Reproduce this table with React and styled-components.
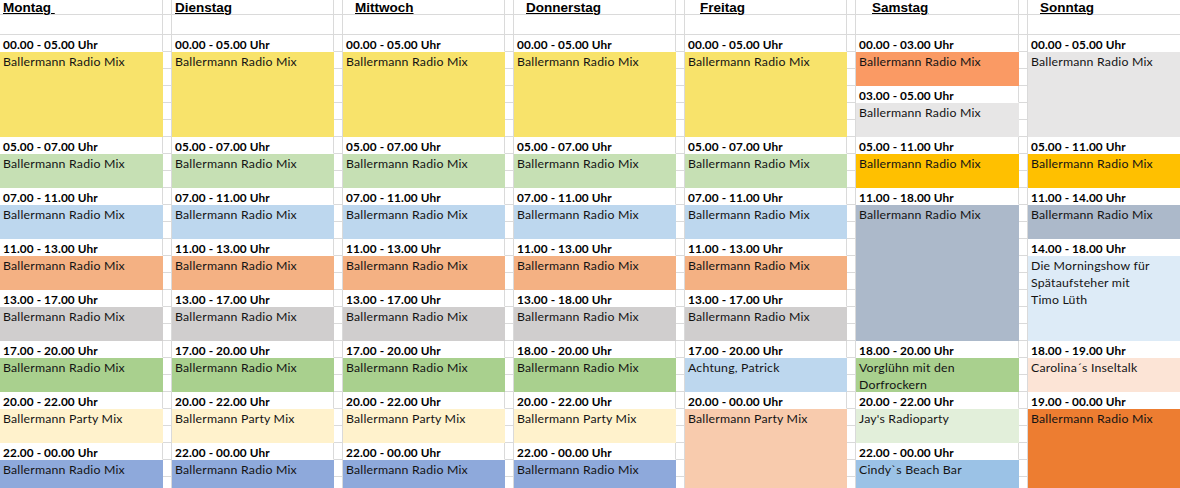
import React from "react";
import styled, { createGlobalStyle } from "styled-components";

const GlobalStyle = createGlobalStyle`
	html, body {
		margin: 0;
		padding: 0;
		background: #ffffff;
		overflow: hidden;
	}
	body {
		font-family: Lato, "Liberation Sans", sans-serif;
		color: #111111;
	}
`;

const GRID = "#dadada";

const Sheet = styled.div`
	display: grid;
	grid-template-columns: 163px 9px 162px 9px 162px 9px 162px 9px 162px 9px 163px 9px 162px;
	grid-template-rows: 15px 20px repeat(27, 17px);
	width: 1190px;
`;

const Cell = styled.div`
	box-sizing: border-box;
	grid-column: ${(p) => p.$col};
	grid-row: ${(p) => `${p.$row} / span ${p.$span || 1}`};
	border-right: 1px solid ${GRID};
	border-bottom: 1px solid ${GRID};
	overflow: hidden;
	white-space: nowrap;
`;

const HeaderCell = styled(Cell)`
	padding-left: ${(p) => p.$indent}px;
	font-family: "Liberation Sans", Arial, sans-serif;
	font-size: 13.5px;
	font-weight: 700;
	line-height: 15px;
	text-decoration: underline;
	text-decoration-thickness: 1px;
	color: #000000;
	overflow: visible;
	white-space: pre;
`;

const TimeCell = styled(Cell)`
	padding: 1px 0 0 3px;
	font-size: 11.8px;
	font-weight: 700;
	letter-spacing: 0.1px;
	line-height: 17px;
	border-bottom-color: #ffffff;
	color: #000000;
`;

const ShowCell = styled(Cell)`
	padding: 1px 0 0 3px;
	font-size: 12.3px;
	letter-spacing: 0.2px;
	line-height: 17px;
	background: ${(p) => p.$bg};
	border-color: ${(p) => p.$bg};
	color: #141414;
`;

const C = {
	yellow: "#f8e36b",
	lgreen: "#c6e0b4",
	lblue: "#bdd7ee",
	salmon: "#f4b183",
	gray: "#d0cece",
	green: "#a9d08e",
	cream: "#fff2cc",
	blue: "#8ea9db",
	orangeS: "#fa9a64",
	lgray: "#e7e6e6",
	amber: "#ffc000",
	grayblue: "#acb9ca",
	mint: "#e2efda",
	blue2: "#9bc2e6",
	sky: "#ddebf7",
	blush: "#fce4d6",
	orange: "#ed7d31",
	peach: "#f8cbad",
};

const RM = ["Ballermann Radio Mix"];
const PM = ["Ballermann Party Mix"];

const slot = (t, lines, span, bg) => ({ t, lines, span, bg });

const weekday = (a, b) => [
	slot("00.00 - 05.00 Uhr", RM, 5, C.yellow),
	slot("05.00 - 07.00 Uhr", RM, 2, C.lgreen),
	slot("07.00 - 11.00 Uhr", RM, 2, C.lblue),
	slot("11.00 - 13.00 Uhr", RM, 2, C.salmon),
	slot(a, RM, 2, C.gray),
	slot(b, RM, 2, C.green),
	slot("20.00 - 22.00 Uhr", PM, 2, C.cream),
	slot("22.00 - 00.00 Uhr", RM, 2, C.blue),
];

const days = [
	{ name: "Montag ", indent: 3, slots: weekday("13.00 - 17.00 Uhr", "17.00 - 20.00 Uhr") },
	{ name: "Dienstag", indent: 3, slots: weekday("13.00 - 17.00 Uhr", "17.00 - 20.00 Uhr") },
	{ name: "Mittwoch", indent: 12, slots: weekday("13.00 - 17.00 Uhr", "17.00 - 20.00 Uhr") },
	{ name: "Donnerstag", indent: 12, slots: weekday("13.00 - 18.00 Uhr", "18.00 - 20.00 Uhr") },
	{
		name: "Freitag",
		indent: 15,
		slots: [
			slot("00.00 - 05.00 Uhr", RM, 5, C.yellow),
			slot("05.00 - 07.00 Uhr", RM, 2, C.lgreen),
			slot("07.00 - 11.00 Uhr", RM, 2, C.lblue),
			slot("11.00 - 13.00 Uhr", RM, 2, C.salmon),
			slot("13.00 - 17.00 Uhr", RM, 2, C.gray),
			slot("17.00 - 20.00 Uhr", ["Achtung, Patrick"], 2, C.lblue),
			slot("20.00 - 00.00 Uhr", PM, 5, C.peach),
		],
	},
	{
		name: "Samstag",
		indent: 16,
		slots: [
			slot("00.00 - 03.00 Uhr", RM, 2, C.orangeS),
			slot("03.00 - 05.00 Uhr", RM, 2, C.lgray),
			slot("05.00 - 11.00 Uhr", RM, 2, C.amber),
			slot("11.00 - 18.00 Uhr", RM, 8, C.grayblue),
			slot("18.00 - 20.00 Uhr", ["Vorglühn mit den", "Dorfrockern"], 2, C.green),
			slot("20.00 - 22.00 Uhr", ["Jay's Radioparty"], 2, C.mint),
			slot("22.00 - 00.00 Uhr", ["Cindy`s Beach Bar"], 2, C.blue2),
		],
	},
	{
		name: "Sonntag",
		indent: 12,
		slots: [
			slot("00.00 - 05.00 Uhr", RM, 5, C.lgray),
			slot("05.00 - 11.00 Uhr", RM, 2, C.amber),
			slot("11.00 - 14.00 Uhr", RM, 2, C.grayblue),
			slot("14.00 - 18.00 Uhr", ["Die Morningshow für", "Spätaufsteher mit", "Timo Lüth"], 5, C.sky),
			slot("18.00 - 19.00 Uhr", ["Carolina´s Inseltalk"], 2, C.blush),
			slot("19.00 - 00.00 Uhr", RM, 5, C.orange),
		],
	},
];

const TOTAL_ROWS = 29;

const DayColumn = ({ day, col }) => {
	let row = 3;
	const cells = [
		<HeaderCell key="h" $col={col} $row={1} $indent={day.indent}>
			{day.name}
		</HeaderCell>,
		<Cell key="e" $col={col} $row={2} />,
	];
	day.slots.forEach((s, i) => {
		cells.push(
			<TimeCell key={`t${i}`} $col={col} $row={row}>
				{s.t}
			</TimeCell>
		);
		cells.push(
			<ShowCell key={`s${i}`} $col={col} $row={row + 1} $span={s.span} $bg={s.bg}>
				{s.lines.map((l) => (
					<div key={l}>{l}</div>
				))}
			</ShowCell>
		);
		row += 1 + s.span;
	});
	return cells;
};

const Spacer = ({ col }) =>
	Array.from({ length: TOTAL_ROWS }, (_, i) => <Cell key={i} $col={col} $row={i + 1} />);

const App = () => {
	return (
		<>
			<GlobalStyle />
			<Sheet>
				{days.map((d, i) => (
					<React.Fragment key={d.name}>
						<DayColumn day={d} col={i * 2 + 1} />
						{i < days.length - 1 && <Spacer col={i * 2 + 2} />}
					</React.Fragment>
				))}
			</Sheet>
		</>
	);
};

export default App;
